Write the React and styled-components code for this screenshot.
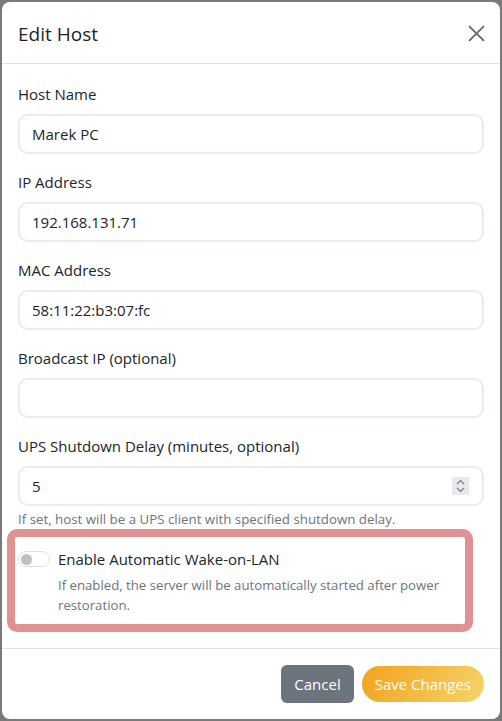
import React, { useState } from "react";
import styled, { createGlobalStyle } from "styled-components";

const GlobalStyle = createGlobalStyle`
  html, body {
    margin: 0;
    padding: 0;
    background: #7a7a7a;
    font-family: "Open Sans", "Noto Sans", sans-serif;
  }
  * { box-sizing: border-box; }
`;

const Page = styled.div`
  height: 721px;
  padding: 2px 2px 2px 2px;
`;

const Modal = styled.div`
  width: 498px;
  height: 717px;
  background: #fff;
  border-radius: 8px;
  display: flex;
  flex-direction: column;
  overflow: hidden;
`;

const Header = styled.div`
  height: 62px;
  padding: 2px 16px 0;
  display: flex;
  align-items: center;
  justify-content: space-between;
  border-bottom: 1px solid #dee2e6;
`;

const Title = styled.h5`
  margin: 0;
  font-size: 19px;
  font-weight: 400;
  color: #212529;
`;

const CloseButton = styled.button`
  border: none;
  background: none;
  padding: 0;
  width: 20px;
  height: 20px;
  display: flex;
  align-items: center;
  justify-content: center;
  cursor: pointer;
  margin-right: -2px;
`;

const Body = styled.div`
  padding: 18px 16px 14px;
  flex: 1;
`;

const Group = styled.div`
  margin-bottom: ${(p) => (p.tight ? "0" : "16px")};
`;

const Label = styled.label`
  display: block;
  font-size: 15px;
  line-height: 24px;
  color: #212529;
  margin-bottom: 8px;
`;

const Input = styled.input`
  display: block;
  width: 100%;
  height: 40px;
  padding: 0 12px;
  font-family: inherit;
  font-size: 15px;
  color: #212529;
  border: 2px solid #e8ebef;
  border-radius: 10px;
  outline: none;
`;

const NumberBox = styled.div`
  display: flex;
  align-items: center;
  height: 40px;
  padding: 0 12px;
  border: 2px solid #e8ebef;
  border-radius: 10px;
`;

const BareInput = styled.input`
  flex: 1;
  border: none;
  outline: none;
  font-family: inherit;
  font-size: 15px;
  color: #212529;
  padding: 0;
`;

const Spinner = styled.div`
  width: 17px;
  height: 18px;
  background: #e9e9ed;
  display: flex;
  align-items: center;
  justify-content: center;
  margin-right: 1px;
`;

const Help = styled.div`
  margin-top: 3px;
  font-size: 13.3px;
  line-height: 21px;
  color: #6c757d;
`;

const Highlight = styled.div`
  margin: -1px 11px 0 -11px;
  border: 8px solid #e09192;
  border-radius: 10px;
  padding: 10px 3px 9px 3px;
`;

const SwitchRow = styled.div`
  display: flex;
  align-items: center;
  gap: 8px;
`;

const Switch = styled.span`
  width: 32px;
  height: 16px;
  border: 1px solid #dee2e6;
  border-radius: 8px;
  display: flex;
  align-items: center;
  padding-left: 2px;
  cursor: pointer;
  &::before {
    content: "";
    width: 11px;
    height: 11px;
    border-radius: 50%;
    background: #bfbfbf;
  }
`;

const SwitchLabel = styled.span`
  font-size: 15px;
  line-height: 24px;
  color: #212529;
`;

const SwitchHelp = styled.div`
  margin: 4px 0 0 40px;
  font-size: 13.2px;
  line-height: 20px;
  color: #6c757d;
`;

const Footer = styled.div`
  border-top: 1px solid #dee2e6;
  padding: 16px;
  display: flex;
  justify-content: flex-end;
  align-items: center;
  gap: 8px;
`;

const Button = styled.button`
  height: ${(p) => (p.primary ? "36px" : "38px")};
  padding: 0 13px;
  border: none;
  border-radius: ${(p) => (p.primary ? "18px" : "6px")};
  background: ${(p) =>
    p.primary ? "linear-gradient(120deg, #f2a21e 0%, #f6d46a 100%)" : "#6c757d"};
  color: #fff;
  font-family: inherit;
  font-size: 15px;
  cursor: pointer;
`;

function App() {
  const [name, setName] = useState("Marek PC");
  const [ip, setIp] = useState("192.168.131.71");
  const [mac, setMac] = useState("58:11:22:b3:07:fc");
  const [broadcast, setBroadcast] = useState("");
  const [delay, setDelay] = useState("5");
  const [wol, setWol] = useState(false);

  return (
    <Page>
      <GlobalStyle />
      <Modal>
        <Header>
          <Title>Edit Host</Title>
          <CloseButton aria-label="Close">
            <svg width="17" height="17" viewBox="0 0 16 16">
              <path d="M1 1L15 15M15 1L1 15" stroke="#6b6b6b" strokeWidth="1.8" />
            </svg>
          </CloseButton>
        </Header>
        <Body>
          <Group>
            <Label>Host Name</Label>
            <Input value={name} onChange={(e) => setName(e.target.value)} />
          </Group>
          <Group>
            <Label>IP Address</Label>
            <Input value={ip} onChange={(e) => setIp(e.target.value)} />
          </Group>
          <Group>
            <Label>MAC Address</Label>
            <Input value={mac} onChange={(e) => setMac(e.target.value)} />
          </Group>
          <Group>
            <Label>Broadcast IP (optional)</Label>
            <Input value={broadcast} onChange={(e) => setBroadcast(e.target.value)} />
          </Group>
          <Group tight>
            <Label>UPS Shutdown Delay (minutes, optional)</Label>
            <NumberBox>
              <BareInput value={delay} onChange={(e) => setDelay(e.target.value)} />
              <Spinner>
                <svg width="9" height="14" viewBox="0 0 9 14">
                  <path d="M1 5L4.5 1.5L8 5M1 9L4.5 12.5L8 9" fill="none" stroke="#7b7b85" strokeWidth="1.2" />
                </svg>
              </Spinner>
            </NumberBox>
            <Help>If set, host will be a UPS client with specified shutdown delay.</Help>
          </Group>
          <Highlight>
            <SwitchRow>
              <Switch onClick={() => setWol(!wol)} />
              <SwitchLabel>Enable Automatic Wake-on-LAN</SwitchLabel>
            </SwitchRow>
            <SwitchHelp>
              If enabled, the server will be automatically started after power restoration.
            </SwitchHelp>
          </Highlight>
        </Body>
        <Footer>
          <Button>Cancel</Button>
          <Button primary>Save Changes</Button>
        </Footer>
      </Modal>
    </Page>
  );
}

export default App;
